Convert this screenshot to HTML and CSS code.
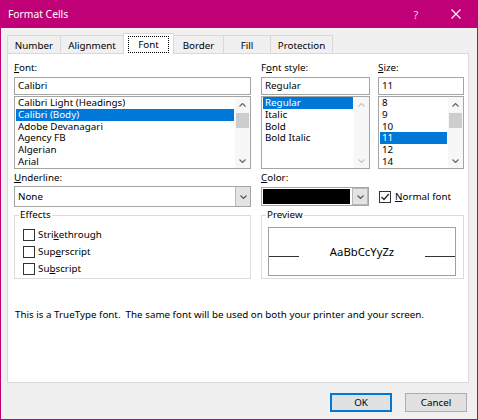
FILE: index.html
```html
<!DOCTYPE html>
<html>
<head>
<meta charset="utf-8">
<title>Format Cells</title>
<link rel="stylesheet" href="styles.css">
</head>
<body>
<div class="window">
  <div class="titlebar">
    <span class="title">Format Cells</span>
    <span class="tb-btn help">?</span>
    <span class="tb-btn close">
      <svg width="10" height="10" viewBox="0 0 10 10"><path d="M0.5 0.5 L9.5 9.5 M9.5 0.5 L0.5 9.5" stroke="#fff" stroke-width="1.1" fill="none"/></svg>
    </span>
  </div>

  <div class="tabs">
    <div class="tab t-number">Number</div>
    <div class="tab t-align">Alignment</div>
    <div class="tab t-font active"><span class="focus">Font</span></div>
    <div class="tab t-border">Border</div>
    <div class="tab t-fill">Fill</div>
    <div class="tab t-prot">Protection</div>
  </div>

  <div class="panel">
    <div class="row top">
      <div class="col c-font">
        <div class="label"><u>F</u>ont:</div>
        <div class="input">Calibri</div>
        <div class="list">
          <div class="items">
            <div class="item">Calibri Light (Headings)</div>
            <div class="item sel">Calibri (Body)</div>
            <div class="item">Adobe Devanagari</div>
            <div class="item">Agency FB</div>
            <div class="item">Algerian</div>
            <div class="item">Arial</div>
          </div>
          <div class="scroll">
            <div class="arrow"><svg width="7" height="4" viewBox="0 0 7 4"><polyline points="0.5,3.5 3.5,0.5 6.5,3.5" fill="none" stroke="#606060" stroke-width="1.1"/></svg></div>
            <div class="thumb"></div>
            <div class="track"></div>
            <div class="arrow"><svg width="7" height="4" viewBox="0 0 7 4"><polyline points="0.5,0.5 3.5,3.5 6.5,0.5" fill="none" stroke="#606060" stroke-width="1.1"/></svg></div>
          </div>
        </div>
      </div>

      <div class="col c-style">
        <div class="label">F<u>o</u>nt style:</div>
        <div class="input">Regular</div>
        <div class="list">
          <div class="items">
            <div class="item sel">Regular</div>
            <div class="item">Italic</div>
            <div class="item">Bold</div>
            <div class="item">Bold Italic</div>
          </div>
          <div class="scroll disabled">
            <div class="arrow"><svg width="7" height="4" viewBox="0 0 7 4"><polyline points="0.5,3.5 3.5,0.5 6.5,3.5" fill="none" stroke="#c4c4c4" stroke-width="1.1"/></svg></div>
            <div class="track"></div>
            <div class="arrow"><svg width="7" height="4" viewBox="0 0 7 4"><polyline points="0.5,0.5 3.5,3.5 6.5,0.5" fill="none" stroke="#c4c4c4" stroke-width="1.1"/></svg></div>
          </div>
        </div>
      </div>

      <div class="col c-size">
        <div class="label"><u>S</u>ize:</div>
        <div class="input">11</div>
        <div class="list">
          <div class="items">
            <div class="item">8</div>
            <div class="item">9</div>
            <div class="item">10</div>
            <div class="item sel">11</div>
            <div class="item">12</div>
            <div class="item">14</div>
          </div>
          <div class="scroll">
            <div class="arrow"><svg width="7" height="4" viewBox="0 0 7 4"><polyline points="0.5,3.5 3.5,0.5 6.5,3.5" fill="none" stroke="#606060" stroke-width="1.1"/></svg></div>
            <div class="thumb"></div>
            <div class="track"></div>
            <div class="arrow"><svg width="7" height="4" viewBox="0 0 7 4"><polyline points="0.5,0.5 3.5,3.5 6.5,0.5" fill="none" stroke="#606060" stroke-width="1.1"/></svg></div>
          </div>
        </div>
      </div>
    </div>

    <div class="row mid">
      <div class="col c-font">
        <div class="label"><u>U</u>nderline:</div>
        <div class="combo underline">
          <span class="combo-text">None</span>
          <span class="dd"><svg width="7" height="4" viewBox="0 0 7 4"><polyline points="0.5,0.5 3.5,3.5 6.5,0.5" fill="none" stroke="#555" stroke-width="1.1"/></svg></span>
        </div>
      </div>
      <div class="col c-style">
        <div class="label"><u>C</u>olor:</div>
        <div class="combo color">
          <span class="swatch"></span>
          <span class="dd"><svg width="7" height="4" viewBox="0 0 7 4"><polyline points="0.5,0.5 3.5,3.5 6.5,0.5" fill="none" stroke="#555" stroke-width="1.1"/></svg></span>
        </div>
      </div>
      <div class="col c-size">
        <div class="check-inline">
          <span class="cbox"><svg width="10" height="10" viewBox="0 0 10 10"><polyline points="1.5,5 4,7.5 8.8,2" fill="none" stroke="#222" stroke-width="1.2"/></svg></span>
          <span class="cb-label"><u>N</u>ormal font</span>
        </div>
      </div>
    </div>

    <div class="row groups">
      <fieldset class="group effects">
        <legend>Effects</legend>
        <div class="effects-body">
          <div class="cb-row"><span class="cbox"></span><span class="cb-label">Stri<u>k</u>ethrough</span></div>
          <div class="cb-row"><span class="cbox"></span><span class="cb-label">Sup<u>e</u>rscript</span></div>
          <div class="cb-row"><span class="cbox"></span><span class="cb-label">Su<u>b</u>script</span></div>
        </div>
      </fieldset>
      <fieldset class="group preview">
        <legend>Preview</legend>
        <div class="preview-box">
          <span class="pline"></span>
          <span class="sample">AaBbCcYyZz</span>
          <span class="pline"></span>
        </div>
      </fieldset>
    </div>

    <p class="note">This is a TrueType font.&nbsp; The same font will be used on both your printer and your screen.</p>
  </div>

  <div class="footer">
    <button class="btn default">OK</button>
    <button class="btn">Cancel</button>
  </div>
</div>
</body>
</html>
```

FILE: styles.css
```css
* { box-sizing: border-box; }
html, body { margin: 0; padding: 0; }
body {
  width: 478px;
  height: 420px;
  font-family: "Segoe UI", "Noto Sans", sans-serif;
  font-size: 9.8px;
  color: #000;
  background: #fff;
}
u { text-decoration: underline; text-underline-offset: 1px; }

.window {
  width: 478px;
  height: 420px;
  background: #f0f0f0;
  border: 1px solid #bf0077;
  border-top: 0;
  display: flex;
  flex-direction: column;
}

/* title bar */
.titlebar {
  height: 28px;
  flex: none;
  margin: 0 -1px;
  background: #bf0077;
  color: #fff;
  display: flex;
  align-items: center;
  padding-left: 8px;
  padding-right: 2px;
}
.title { flex: 1; font-size: 10.3px; }
.tb-btn {
  width: 40px;
  display: flex;
  justify-content: center;
  align-items: center;
}
.help { font-size: 11px; color: #f3cfe4; }

/* tabs */
.tabs {
  height: 20px;
  flex: none;
  margin-top: 5px;
  padding-left: 6px;
  display: flex;
  align-items: flex-end;
  position: relative;
  z-index: 1;
}
.tab {
  height: 18px;
  border: 1px solid #d9d9d9;
  border-bottom: 0;
  margin-right: -1px;
  background: #f0f0f0;
  text-align: center;
  padding-top: 2px;
  line-height: 15px;
}
.t-number { width: 54px; }
.t-align { width: 64px; }
.t-font { width: 51px; }
.t-border { width: 51px; }
.t-fill { width: 48px; }
.t-prot { width: 63px; }
.tab.active {
  height: 21px;
  margin-bottom: -1px;
  background: #fff;
  padding-top: 2px;
  display: flex;
  justify-content: center;
  align-items: flex-start;
}
.focus {
  display: block;
  width: 41px;
  height: 17px;
  border: 1px dotted #000;
  line-height: 15px;
  text-align: center;
}

/* panel */
.panel {
  height: 330px;
  flex: none;
  margin: 0 8px 0 6px;
  border: 1px solid #d9d9d9;
  background: #fff;
  padding: 7px 3px 0 6px;
}
.row { display: flex; }
.c-font { width: 237px; margin-right: 10px; flex: none; }
.c-style { width: 109px; margin-right: 8px; flex: none; }
.c-size { width: 86px; flex: none; }

.label { height: 14px; line-height: 14px; white-space: nowrap; }
.input {
  margin-top: 2px;
  height: 18px;
  border: 1px solid #a5a5a5;
  padding-left: 3px;
  line-height: 16px;
}
.list {
  margin-top: 1px;
  height: 73px;
  border: 1px solid #a5a5a5;
  display: flex;
  overflow: hidden;
}
.items {
  flex: 1;
  padding: 0 1px;
  overflow: hidden;
}
.item {
  height: 11.8px;
  line-height: 11.8px;
  padding-left: 2px;
  white-space: nowrap;
}
.item.sel { background: #0078d7; color: #fff; }
.scroll {
  width: 15px;
  flex: none;
  background: #f7f7f7;
  display: flex;
  flex-direction: column;
}
.arrow {
  height: 15px;
  flex: none;
  display: flex;
  align-items: center;
  justify-content: center;
}
.arrow svg { display: block; }
.thumb {
  height: 15px;
  flex: none;
  margin: 1px 1px 0;
  background: #cdcdcd;
}
.track { flex: 1; }

/* middle row */
.mid { margin-top: 2px; }
.combo {
  display: flex;
  border: 1px solid #a5a5a5;
  background: #fff;
}
.combo.underline { margin-top: 1px; height: 21px; }
.combo.color { margin-top: 2px; height: 19px; width: 108px; }
.combo-text { flex: 1; padding-left: 3px; line-height: 19px; }
.dd {
  width: 15px;
  flex: none;
  background: #e3e3e3;
  border-left: 1px solid #b8b8b8;
  display: flex;
  align-items: center;
  justify-content: center;
}
.combo.color .dd { width: 16px; border: 1px solid #b8b8b8; margin: 0; }
.swatch { flex: 1; background: #000; margin: 1px 2px 1px 1px; }

.check-inline {
  margin-top: 15px;
  height: 21px;
  display: flex;
  align-items: center;
  padding-left: 1px;
}
.cbox {
  width: 12px;
  height: 12px;
  flex: none;
  border: 1px solid #333;
  background: #fff;
  display: flex;
  align-items: center;
  justify-content: center;
}
.cb-label { margin-left: 4px; white-space: nowrap; line-height: 14px; }

/* group boxes */
.groups { margin-top: 1px; }
.group {
  margin: 0;
  padding: 0;
  border: 1px solid #dcdcdc;
  min-width: 0;
  flex: none;
}
.group legend {
  margin-left: 4px;
  padding: 0 1px;
  line-height: 14px;
  height: 14px;
}
.effects { width: 237px; margin-right: 10px; }
.preview { width: 203px; }
.effects-body { padding: 4px 0 1px 8px; }
.cb-row {
  height: 17px;
  display: flex;
  align-items: center;
}
.cb-row .cb-label { margin-left: 3px; }

.preview-box {
  margin: 5px 0 2px 6px;
  width: 188px;
  height: 49px;
  border: 1px solid #a0a0a0;
  display: flex;
  align-items: flex-start;
}
.pline {
  width: 30px;
  height: 1px;
  flex: none;
  margin-top: 28px;
  background: #333;
}
.sample {
  flex: 1;
  text-align: center;
  font-size: 11.3px;
  line-height: 14px;
  margin-top: 17px;
}

.note {
  margin: 29px 0 0 1px;
  line-height: 14px;
  white-space: nowrap;
}

/* footer */
.footer {
  flex: 1;
  display: flex;
  justify-content: flex-end;
  align-items: flex-start;
  padding: 10px 10px 0 0;
  gap: 13px;
}
.btn {
  width: 62px;
  height: 19px;
  margin: 0;
  padding: 0;
  font-family: inherit;
  font-size: 9.8px;
  color: #000;
  background: #e1e1e1;
  border: 1px solid #adadad;
  line-height: 15px;
}
.btn.default {
  border-color: #0078d7;
  box-shadow: inset 0 0 0 1px #0078d7;
}
```
